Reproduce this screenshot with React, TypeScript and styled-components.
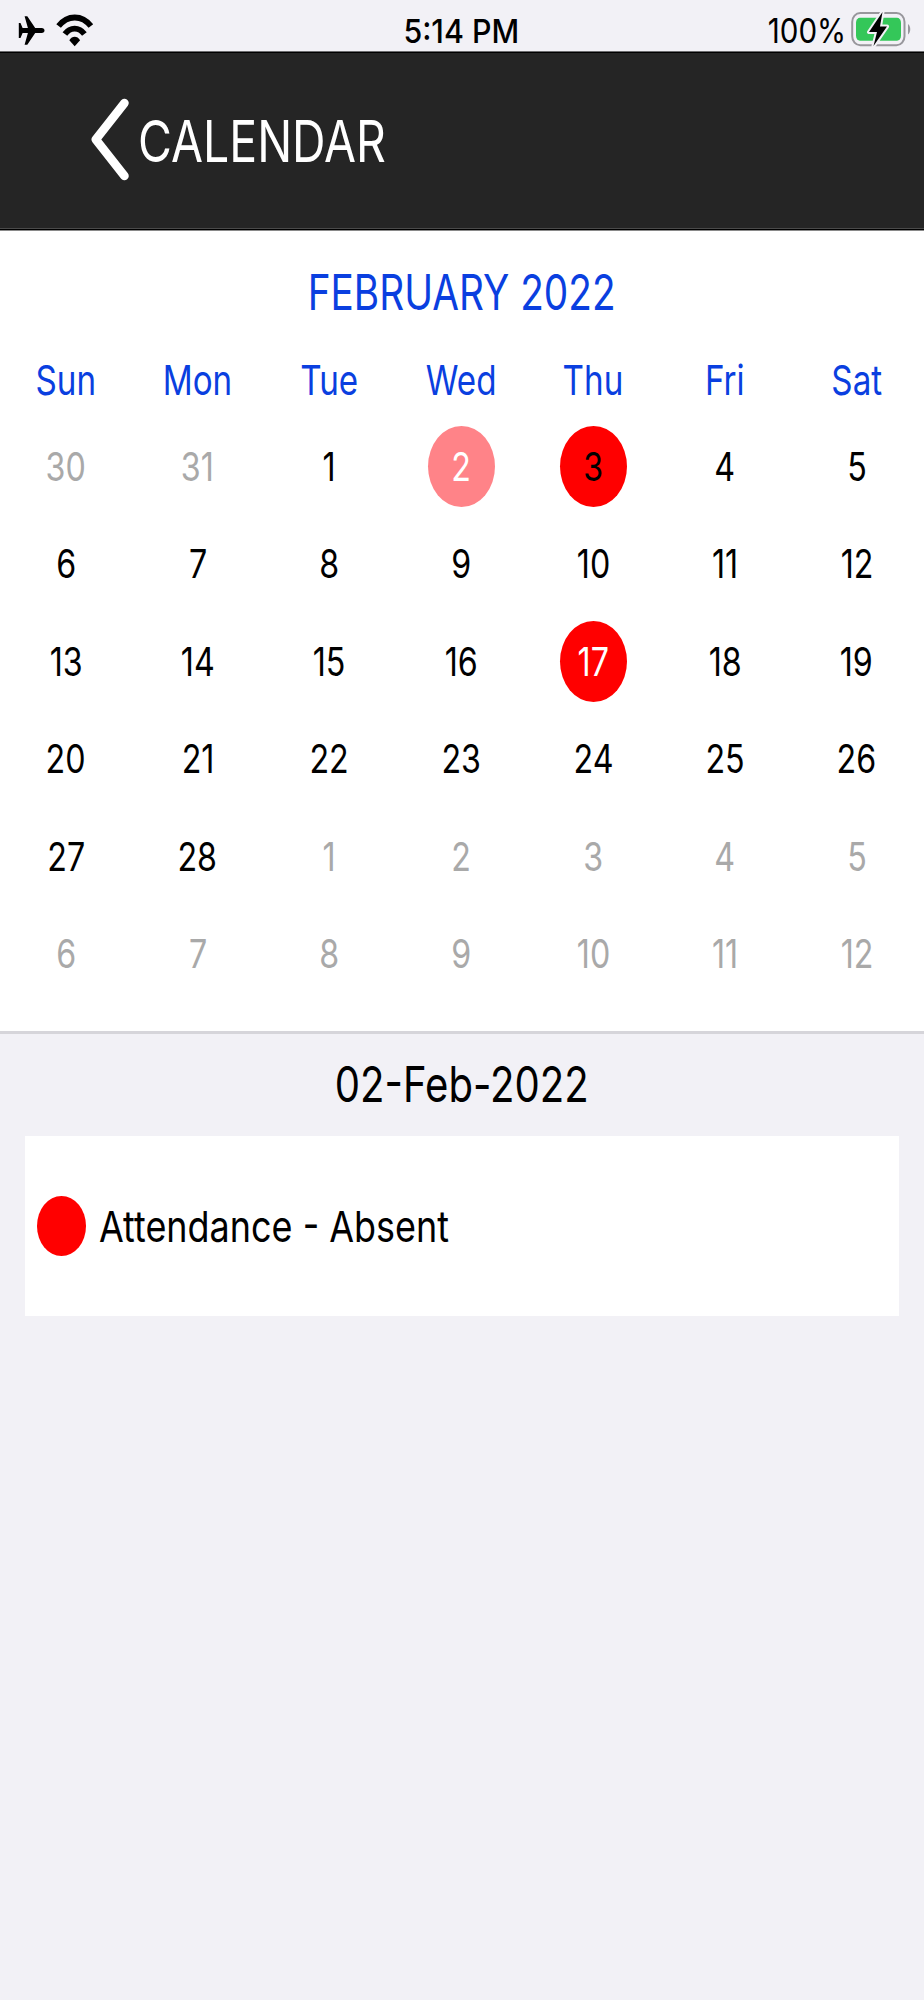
import React from "react";
import styled, { createGlobalStyle } from "styled-components";

const GlobalStyle = createGlobalStyle`
  *, *::before, *::after { box-sizing: border-box; }
  body {
    margin: 0;
    background: #f2f1f6;
    font-family: Inter, "Liberation Sans", sans-serif;
    color: #000;
  }
`;

const Screen = styled.main`
  width: 924px;
  height: 2000px;
  display: flex;
  flex-direction: column;
  background: #f2f1f6;
`;

const Text = styled.span<{
  $size: number;
  $stretch: number;
  $weight?: number;
  $origin?: string;
}>`
  display: block;
  white-space: nowrap;
  line-height: 1;
  font-size: ${(p) => p.$size}px;
  font-weight: ${(p) => p.$weight ?? 400};
  transform: scaleX(${(p) => p.$stretch});
  transform-origin: ${(p) => p.$origin ?? "center"};
`;

const StatusBar = styled.header`
  height: 51px;
  padding: 10px 13px 0 18px;
  display: grid;
  grid-template-columns: 1fr auto 1fr;
  align-items: start;
`;

const StatusLeft = styled.div`
  display: flex;
  align-items: flex-start;
  gap: 10px;
`;

const StatusTime = styled.div`
  padding: 4.5px 6px 0 0;
`;

const StatusRight = styled.div`
  display: flex;
  justify-content: flex-end;
  align-items: flex-start;
  gap: 5px;
`;

const BatteryLabel = styled.div`
  padding-top: 4px;
`;

const NavBar = styled.nav`
  height: 180px;
  padding: 0 0 0 90px;
  display: flex;
  align-items: flex-start;
  background: #252525;
  border-top: 1px solid #6c6c6e;
  border-bottom: 1px solid #8a8a8a;
  box-shadow: inset 0 1px #000, inset 0 -1px #000, inset 0 -2px #4a4a4a;
`;

const BackButton = styled.button`
  display: flex;
  align-items: flex-start;
  padding: 46px 0 0;
  border: 0;
  background: none;
  color: #fff;
  font: inherit;
`;

const NavTitle = styled.div`
  padding: 14px 0 0 8px;
`;

const Calendar = styled.section`
  height: 803px;
  background: #fff;
  border-bottom: 3px solid #d6d5da;
`;

const Month = styled.div`
  height: 101px;
  padding-top: 37px;
  display: flex;
  justify-content: center;
  color: #0a3fe0;
`;

const Week = styled.div`
  display: grid;
  grid-template-columns: repeat(7, 1fr);
  justify-items: center;
  padding-right: 1.4px;
`;

const WeekdayRow = styled(Week)`
  height: 85.7px;
  padding-top: 28px;
  color: #0a3fe0;
`;

const WeekRow = styled(Week)`
  height: 97.5px;
  align-items: center;
`;

type Mark = "selected" | "today" | "absent";

const markFill: Record<Mark, string> = {
  selected: "#ff8388",
  today: "#ff0000",
  absent: "#ff0000",
};

const Day = styled.div<{ $mark?: Mark; $muted: boolean }>`
  width: 67px;
  height: 81px;
  padding-top: 2px;
  display: flex;
  align-items: center;
  justify-content: center;
  border-radius: 50%;
  background: ${(p) => (p.$mark ? markFill[p.$mark] : "transparent")};
  color: ${(p) =>
    p.$mark && p.$mark !== "today" ? "#fff" : p.$muted ? "#a9a9a9" : "#000"};
`;

const DateHeading = styled.h2`
  height: 102px;
  margin: 0;
  padding-top: 26px;
  display: flex;
  justify-content: center;
`;

const EventCard = styled.article`
  height: 180px;
  margin: 0 25px;
  padding-left: 12px;
  display: flex;
  align-items: center;
  background: #fff;
`;

const EventDot = styled.span`
  width: 49px;
  height: 60px;
  border-radius: 50%;
  background: #f00;
`;

const EventName = styled.div`
  padding: 1px 0 0 13px;
`;

const Airplane = () => (
  <svg width="27" height="40" viewBox="0 0 27 40">
    <path
      d="M26.5 20.5C26.5 19.1 25.5 18.1 23.6 18.1H17.2L9.3 6.2H6.6L9.9 18.1H4.6L2.5 13H0.8V28H2.5L4.6 22.9H9.9L6.6 34.8H9.3L17.2 22.9H23.6C25.5 22.9 26.5 21.9 26.5 20.5Z"
      fill="#000"
    />
  </svg>
);

const Wifi = () => (
  <svg width="40" height="40" viewBox="0 0 40 40">
    <g fill="none" stroke="#000">
      <path d="M3.6 16.1C12.5 4.6 27 4.6 35.9 16.1" strokeWidth="5.8" />
      <path d="M9.9 24C15.2 16.8 24.1 16.8 29.4 24" strokeWidth="5.8" />
    </g>
    <path d="M14.3 30.2C17.2 25.6 22.2 25.6 25.1 30.2L19.7 36.3Z" fill="#000" />
  </svg>
);

const Battery = () => (
  <svg width="60" height="40" viewBox="0 0 60 40">
    <rect x="1.2" y="3" width="52.3" height="32.2" rx="8" ry="9" fill="none" stroke="#98979c" strokeWidth="2" />
    <rect x="5" y="7.7" width="45" height="23" rx="4" ry="5" fill="#34c759" />
    <path d="M57 14C60 16 60 22.5 57 24.5Z" fill="#98979c" />
    <path
      d="M31.5 2L18 22H26L22.5 36L36 16.5H29Z"
      fill="#000"
      stroke="#f2f1f6"
      strokeWidth="4"
      strokeLinejoin="round"
    />
    <path d="M31.5 2L18 22H26L22.5 36L36 16.5H29Z" fill="#000" />
  </svg>
);

const Chevron = () => (
  <svg width="40" height="86" viewBox="0 0 40 86">
    <path
      d="M34.5 5L5.8 41.5L34.5 78"
      fill="none"
      stroke="#fff"
      strokeWidth="8.5"
      strokeLinejoin="round"
      strokeLinecap="round"
    />
  </svg>
);

const weekdays = ["Sun", "Mon", "Tue", "Wed", "Thu", "Fri", "Sat"];

const weeks = [
  [30, 31, 1, 2, 3, 4, 5],
  [6, 7, 8, 9, 10, 11, 12],
  [13, 14, 15, 16, 17, 18, 19],
  [20, 21, 22, 23, 24, 25, 26],
  [27, 28, 1, 2, 3, 4, 5],
  [6, 7, 8, 9, 10, 11, 12],
];

const marks: Record<string, Mark> = {
  "0-3": "selected",
  "0-4": "today",
  "2-4": "absent",
};

const isOutside = (row: number, col: number) =>
  (row === 0 && col < 2) || (row === 4 && col > 1) || row === 5;

export default function App() {
  return (
    <>
      <GlobalStyle />
      <Screen>
        <StatusBar>
          <StatusLeft>
            <Airplane />
            <Wifi />
          </StatusLeft>
          <StatusTime>
            <Text $size={33.2} $stretch={0.915} $weight={500}>5:14 PM</Text>
          </StatusTime>
          <StatusRight>
            <BatteryLabel>
              <Text $size={34} $stretch={0.87} $origin="right">100%</Text>
            </BatteryLabel>
            <Battery />
          </StatusRight>
        </StatusBar>

        <NavBar>
          <BackButton>
            <Chevron />
            <NavTitle>
              <Text $size={58} $stretch={0.8} $origin="left">CALENDAR</Text>
            </NavTitle>
          </BackButton>
        </NavBar>

        <Calendar>
          <Month>
            <Text $size={49} $stretch={0.791}>FEBRUARY 2022</Text>
          </Month>
          <WeekdayRow>
            {weekdays.map((name) => (
              <Text key={name} $size={41.5} $stretch={0.8}>{name}</Text>
            ))}
          </WeekdayRow>
          {weeks.map((week, row) => (
            <WeekRow key={row}>
              {week.map((day, col) => (
                <Day key={col} $mark={marks[`${row}-${col}`]} $muted={isOutside(row, col)}>
                  <Text $size={39.5} $stretch={0.815}>{day}</Text>
                </Day>
              ))}
            </WeekRow>
          ))}
        </Calendar>

        <DateHeading>
          <Text $size={49.5} $stretch={0.81}>02-Feb-2022</Text>
        </DateHeading>
        <EventCard>
          <EventDot />
          <EventName>
            <Text $size={43} $stretch={0.836} $origin="left">Attendance - Absent</Text>
          </EventName>
        </EventCard>
      </Screen>
    </>
  );
}
